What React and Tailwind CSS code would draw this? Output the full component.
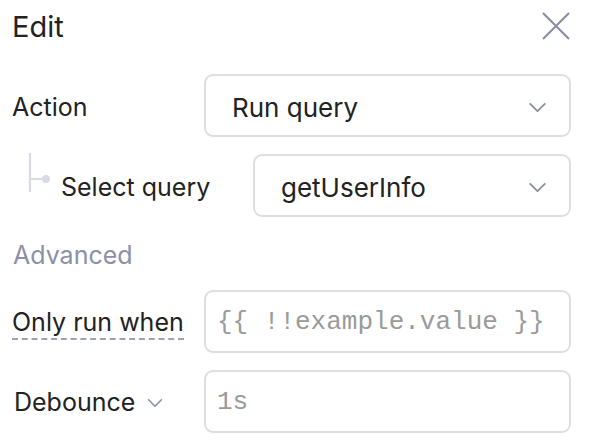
import React from 'react';

function Chevron({ className }) {
    return (
        <svg className={className} viewBox="0 0 20 12" fill="none" stroke="currentColor" strokeWidth="2" strokeLinecap="round" strokeLinejoin="round">
            <path d="M2 2l8 8 8-8" />
        </svg>
    );
}

function SelectBox({ value }) {
    return (
        <div className="flex-1 h-[63px] flex items-center justify-between pt-[4px] pl-[26px] pr-[22px] border-2 border-[#dcdee4] rounded-[9px] bg-white">
            <span className="text-[26px] text-[#222]">{value}</span>
            <Chevron className="w-[19px] h-[11px] text-[#8b8fa3]" />
        </div>
    );
}

function InputBox({ placeholder }) {
    return (
        <div className="flex-1 h-[63px] flex items-center pt-[3px] pl-[11px] border-2 border-[#dcdee4] rounded-[9px] bg-white">
            <span className="text-[26px] text-[#9a9a9a] font-['Liberation_Mono',monospace]">{placeholder}</span>
        </div>
    );
}

export default function App() {
    return (
        <div className="w-[590px] h-[448px] bg-white font-['Inter',sans-serif] text-[#222] pl-[12px] pr-[19px] pt-[6px]">
            {/* Header */}
            <div className="flex items-center justify-between h-[40px]">
                <h1 className="text-[29px] leading-none">Edit</h1>
                <svg className="w-[28px] h-[28px] text-[#8b8fa3] mr-[1px]" viewBox="0 0 28 28" fill="none" stroke="currentColor" strokeWidth="2.2">
                    <path d="M1 1l26 26M27 1L1 27" />
                </svg>
            </div>

            {/* Action */}
            <div className="flex items-center mt-[28px]">
                <span className="w-[192px] text-[25px] pt-[4px]">Action</span>
                <SelectBox value="Run query" />
            </div>

            {/* Select query */}
            <div className="flex items-center mt-[17px]">
                <div className="w-[241px] flex items-center pt-[4px]">
                    <svg className="w-[40px] h-[40px] ml-[16px] -mt-[29px] shrink-0" viewBox="0 0 40 40" fill="none">
                        <path d="M2 0v39M2 26h14" stroke="#d9dbe3" strokeWidth="2.2" />
                        <circle cx="18" cy="26" r="4" fill="#d9dbe3" />
                    </svg>
                    <span className="text-[25px] -ml-[7px]">Select query</span>
                </div>
                <SelectBox value="getUserInfo" />
            </div>

            {/* Advanced */}
            <div className="mt-[20px] text-[25px] text-[#8d90a8] pl-[1px]">Advanced</div>

            {/* Only run when */}
            <div className="flex items-center mt-[15px]">
                <div className="w-[192px] pt-[4px]">
                    <span className="text-[25px] pb-[1px] border-b-2 border-dashed border-[#9ea1b4]">Only run when</span>
                </div>
                <InputBox placeholder="{{ !!example.value }}" />
            </div>

            {/* Debounce */}
            <div className="flex items-center mt-[17px]">
                <div className="w-[192px] flex items-center gap-[12px] pl-[2px] pt-[4px]">
                    <span className="text-[25px]">Debounce</span>
                    <Chevron className="w-[16px] h-[10px] text-[#8b8fa3]" />
                </div>
                <InputBox placeholder="1s" />
            </div>
        </div>
    );
}
